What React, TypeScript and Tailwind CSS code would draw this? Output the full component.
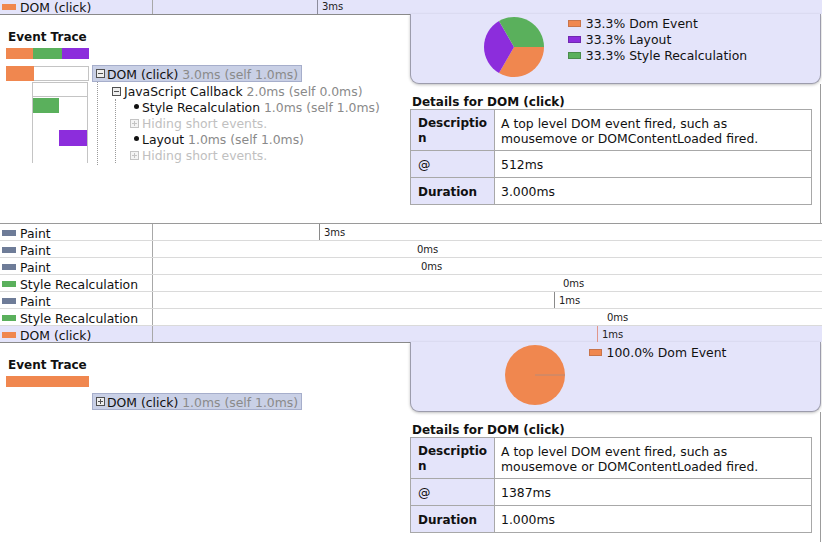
import React from "react";

type TRow = {
  label: string;
  swatch: string;
  ms: string;
  x: number;
  bar?: string;
  selected?: boolean;
};

const firstRow: TRow = { label: "DOM (click)", swatch: "bg-[#f0874f]", ms: "3ms", x: 322, bar: "bg-[#8c8c9c]", selected: true };

const rows: TRow[] = [
  { label: "Paint", swatch: "bg-[#6e7c98]", ms: "3ms", x: 324, bar: "bg-[#8a8a8a]" },
  { label: "Paint", swatch: "bg-[#6e7c98]", ms: "0ms", x: 413 },
  { label: "Paint", swatch: "bg-[#6e7c98]", ms: "0ms", x: 417 },
  { label: "Style Recalculation", swatch: "bg-[#5ab05c]", ms: "0ms", x: 559 },
  { label: "Paint", swatch: "bg-[#6e7c98]", ms: "1ms", x: 559, bar: "bg-[#8a8a8a]" },
  { label: "Style Recalculation", swatch: "bg-[#5ab05c]", ms: "0ms", x: 603 },
];

const lastRow: TRow = { label: "DOM (click)", swatch: "bg-[#f0874f]", ms: "1ms", x: 602, bar: "bg-[#e0968a]", selected: true };

function TimelineRow({ row, className }: { row: TRow; className: string }) {
  // x is where the label starts on the page; the timeline cell starts at 153
  const left = row.x - 153 - (row.bar ? 5 : 0);
  return (
    <div className={`flex ${className} ${row.selected ? "bg-[#e4e4fa]" : "border-b border-[#dadada]"}`}>
      <div className="w-[153px] shrink-0 border-r border-[#a8a8a8] flex items-center">
        <span className={`ml-[2px] w-[14px] h-[6px] translate-y-[1px] ${row.swatch}`} />
        <span className="ml-[4px] text-[12.4px] leading-[16px] text-[#111] translate-y-[2px]">{row.label}</span>
      </div>
      <div className="relative flex-1">
        <div className="absolute inset-y-0 flex" style={{ left }}>
          {row.bar && <div className={`w-px h-full ${row.bar}`} />}
          <span className="ml-[4px] text-[10px] leading-[16px] text-[#222] translate-y-[1px]">{row.ms}</span>
        </div>
      </div>
    </div>
  );
}

function BoxIcon({ plus, light }: { plus?: boolean; light?: boolean }) {
  const c = light ? "#c4c4c4" : "#505050";
  return (
    <svg width="9" height="9" viewBox="0 0 9 9" className="shrink-0">
      <rect x="0.5" y="0.5" width="8" height="8" fill={light ? "#f4f4f4" : "#eeeeee"} stroke={c} />
      <line x1="2" y1="4.5" x2="7" y2="4.5" stroke={c} />
      {plus && <line x1="4.5" y1="2" x2="4.5" y2="7" stroke={c} />}
    </svg>
  );
}

function Bullet() {
  return (
    <span className="w-[12px] flex justify-center shrink-0 mb-[2px]">
      <span className="w-[5px] h-[5px] rounded-full bg-[#111]" />
    </span>
  );
}

function Pie({ slices }: { slices: { d: string; fill: string }[] }) {
  return (
    <svg width="60" height="60" viewBox="0 0 60 60" className="shrink-0">
      {slices.map((s, i) => (
        <path key={i} d={s.d} fill={s.fill} />
      ))}
    </svg>
  );
}

function Legend({ items }: { items: { label: string; swatch: string }[] }) {
  return (
    <div className="flex flex-col">
      {items.map((it) => (
        <div key={it.label} className="flex items-center h-[16px]">
          <span className={`w-[13px] h-[7px] border ${it.swatch}`} />
          <span className="ml-[5px] text-[12.4px] leading-[16px] text-[#111] translate-y-[1px]">{it.label}</span>
        </div>
      ))}
    </div>
  );
}

function Details({ at, duration }: { at: string; duration: string }) {
  return (
    <>
      <div className="mt-[10px] mb-[-1px] pl-[2px] text-[12px] leading-[16px] font-bold text-[#111]">Details for DOM (click)</div>
      <table className="w-[402px] border-collapse text-[12.4px] text-[#111]">
        <tbody>
          <tr>
            <td className="w-[84px] border border-[#a8a8a8] bg-[#e4e4fa] pl-[7px] pt-[6px] pb-[4px] leading-[15px] text-[12px] font-bold align-top">
              Descriptio
              <br />n
            </td>
            <td className="border border-[#a8a8a8] pl-[6px] pt-[6px] pb-[4px] leading-[15px] align-top">
              A top level DOM event fired, such as
              <br />
              mousemove or DOMContentLoaded fired.
            </td>
          </tr>
          <tr>
            <td className="border border-[#a8a8a8] bg-[#e4e4fa] pl-[7px] pt-[6px] pb-[4px] leading-[16px]">@</td>
            <td className="border border-[#a8a8a8] pl-[6px] pt-[6px] pb-[4px] leading-[16px]">{at}</td>
          </tr>
          <tr>
            <td className="border border-[#a8a8a8] bg-[#e4e4fa] pl-[7px] pt-[6px] pb-[4px] leading-[16px] text-[12px] font-bold">Duration</td>
            <td className="border border-[#a8a8a8] pl-[6px] pt-[6px] pb-[4px] leading-[16px]">{duration}</td>
          </tr>
        </tbody>
      </table>
    </>
  );
}

const ORANGE = "#f0874f";

function FirstPanel() {
  return (
    <div className="flex h-[210px] border-b border-[#9a9a9a]">
      <div className="w-[410px] shrink-0 border-t border-[#8a8a8a] pt-[14px]">
        <div className="pl-[8px] text-[12px] leading-[16px] font-bold text-[#111]">Event Trace</div>
        <div className="mt-[3px] ml-[6px] flex h-[11px] w-[83px]">
          <div className="w-[27px] bg-[#f0874f]" />
          <div className="w-[29px] bg-[#5ab05c]" />
          <div className="w-[27px] bg-[#8c2ddc]" />
        </div>
        <div className="mt-[6px] flex">
          <svg width="92" height="100" viewBox="0 0 92 100" className="shrink-0">
            <rect x="6.5" y="1.5" width="82" height="14" fill="#fff" stroke="#c4c4c4" />
            <rect x="6" y="1" width="28" height="15" fill={ORANGE} />
            <rect x="32.5" y="17.5" width="55" height="14" fill="#fff" stroke="#c4c4c4" />
            <line x1="32.5" y1="31" x2="32.5" y2="98" stroke="#c4c4c4" />
            <line x1="87.5" y1="31" x2="87.5" y2="98" stroke="#c4c4c4" />
            <rect x="33" y="33" width="26" height="15" fill="#5ab05c" />
            <rect x="59" y="65" width="28" height="16" fill="#8c2ddc" />
          </svg>
          <div className="text-[12.4px] text-[#111]">
            <div className="flex items-center h-[17px] w-fit border border-[#a6aecb] bg-[#c9d0e6] pl-[3px] pr-[3px]">
              <BoxIcon />
              <span className="ml-[2px] leading-[15px] translate-y-[1px]">
                DOM (click) <span className="text-[#8a8a8a]">3.0ms (self 1.0ms)</span>
              </span>
            </div>
            <div className="ml-[5px] border-l border-dotted border-[#9a9a9a] pl-[14px] pt-[1px] pb-[2px]">
              <div className="flex items-center h-[16px]">
                <BoxIcon />
                <span className="ml-[3px] leading-[16px] translate-y-[1px]">
                  JavaScript Callback <span className="text-[#8a8a8a]">2.0ms (self 0.0ms)</span>
                </span>
              </div>
              <div className="ml-[3px] border-l border-dotted border-[#9a9a9a] pl-[14px]">
                <div className="flex items-center h-[16px]">
                  <Bullet />
                  <span className="leading-[16px] translate-y-[1px]">
                    Style Recalculation <span className="text-[#8a8a8a]">1.0ms (self 1.0ms)</span>
                  </span>
                </div>
                <div className="flex items-center h-[16px]">
                  <BoxIcon plus light />
                  <span className="ml-[3px] leading-[16px] text-[#c0c0c0] translate-y-[1px]">Hiding short events.</span>
                </div>
                <div className="flex items-center h-[16px]">
                  <Bullet />
                  <span className="leading-[16px] translate-y-[1px]">
                    Layout <span className="text-[#8a8a8a]">1.0ms (self 1.0ms)</span>
                  </span>
                </div>
                <div className="flex items-center h-[16px]">
                  <BoxIcon plus light />
                  <span className="ml-[3px] leading-[16px] text-[#c0c0c0] translate-y-[1px]">Hiding short events.</span>
                </div>
              </div>
            </div>
          </div>
        </div>
      </div>
      <div className="w-[411px] shrink-0 flex flex-col">
        <div className="flex justify-center gap-[24px] items-start bg-[#e4e4fa] border-x border-b border-[#9c9cac] rounded-b-[9px] shadow-[0_1px_3px_rgba(0,0,0,0.25)] pt-[3px] pb-[6px] h-[70px]">
          <Pie
            slices={[
              { d: "M30 30 L60 30 A30 30 0 0 1 15 55.98 Z", fill: ORANGE },
              { d: "M30 30 L15 55.98 A30 30 0 0 1 15 4.02 Z", fill: "#8c2ddc" },
              { d: "M30 30 L15 4.02 A30 30 0 0 1 60 30 Z", fill: "#5ab05c" },
            ]}
          />
          <div className="-mt-[2px]">
            <Legend
              items={[
                { label: "33.3% Dom Event", swatch: "bg-[#f0874f] border-[#c8744a]" },
                { label: "33.3% Layout", swatch: "bg-[#8c2ddc] border-[#7028b0]" },
                { label: "33.3% Style Recalculation", swatch: "bg-[#5ab05c] border-[#4a8c4c]" },
              ]}
            />
          </div>
        </div>
        <div className="flex-1 border-r border-[#9c9c9c]">
          <Details at="512ms" duration="3.000ms" />
        </div>
      </div>
    </div>
  );
}

function SecondPanel() {
  return (
    <div className="flex h-[200px]">
      <div className="w-[410px] shrink-0 border-t border-[#8a8a8a] pt-[14px]">
        <div className="pl-[8px] text-[12px] leading-[16px] font-bold text-[#111]">Event Trace</div>
        <div className="mt-[3px] ml-[6px] h-[11px] w-[83px] bg-[#f0874f]" />
        <div className="mt-[6px] ml-[92px] text-[12.4px] text-[#111]">
          <div className="flex items-center h-[17px] w-fit border border-[#a6aecb] bg-[#c9d0e6] pl-[3px] pr-[3px]">
            <BoxIcon plus />
            <span className="ml-[2px] leading-[15px] translate-y-[1px]">
              DOM (click) <span className="text-[#8a8a8a]">1.0ms (self 1.0ms)</span>
            </span>
          </div>
        </div>
      </div>
      <div className="w-[411px] shrink-0 flex flex-col">
        <div className="flex justify-center gap-[24px] items-start bg-[#e4e4fa] border-x border-b border-[#9c9cac] rounded-b-[9px] shadow-[0_1px_3px_rgba(0,0,0,0.25)] pt-[3px] pb-[6px] h-[70px]">
          <svg width="60" height="60" viewBox="0 0 60 60" className="shrink-0">
            <circle cx="30" cy="30" r="30" fill={ORANGE} />
            <line x1="30" y1="30" x2="60" y2="30" stroke="#b88a78" strokeWidth="1" />
          </svg>
          <div className="-mt-[1px]">
            <Legend items={[{ label: "100.0% Dom Event", swatch: "bg-[#f0874f] border-[#c8744a]" }]} />
          </div>
        </div>
        <div className="flex-1 border-r border-[#9c9c9c]">
          <Details at="1387ms" duration="1.000ms" />
        </div>
      </div>
    </div>
  );
}

export default function App() {
  return (
    <div className="w-[822px] h-[542px] overflow-hidden bg-white font-['DejaVu_Sans',Verdana,sans-serif]">
      <div className="-mt-[2px]">
        <TimelineRow row={firstRow} className="h-[16px]" />
      </div>
      <FirstPanel />
      {rows.map((r, i) => (
        <TimelineRow key={i} row={r} className="h-[17px]" />
      ))}
      <TimelineRow row={lastRow} className="h-[16px]" />
      <SecondPanel />
    </div>
  );
}
